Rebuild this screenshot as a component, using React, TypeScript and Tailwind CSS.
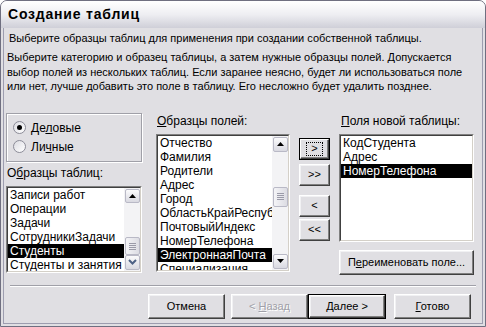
import type { ReactNode } from 'react';

const tableItems = [
  'Записи работ',
  'Операции',
  'Задачи',
  'СотрудникиЗадачи',
  'Студенты',
  'Студенты и занятия',
];

const fieldItems = [
  'Отчество',
  'Фамилия',
  'Родители',
  'Адрес',
  'Город',
  'ОбластьКрайРеспублика',
  'ПочтовыйИндекс',
  'НомерТелефона',
  'ЭлектроннаяПочта',
  'Специализация',
];

const newItems = ['КодСтудента', 'Адрес', 'НомерТелефона'];

const Arrow = ({ dir }: { dir: 'up' | 'down' | 'chevron' }) => (
  <svg width="9" height="6" viewBox="0 0 9 6">
    {dir === 'up' && <path d="M4.5 1 L8 5 L1 5 Z" fill="#000" />}
    {dir === 'down' && <path d="M1 1 L8 1 L4.5 5 Z" fill="#000" />}
    {dir === 'chevron' && (
      <path d="M1 1 L4.5 4.5 L8 1" stroke="#4d6185" strokeWidth="2" fill="none" />
    )}
  </svg>
);

const ScrollButton = ({ children }: { children: ReactNode }) => (
  <div className="flex h-[15px] w-[15px] items-center justify-center rounded-[2px] border border-[#b9b9c6] bg-linear-to-b from-[#fbfbfc] to-[#d9d9e1]">
    {children}
  </div>
);

type ScrollbarProps = {
  thumbTop: number;
  thumbHeight: number;
  downIcon?: 'down' | 'chevron';
};

const Scrollbar = ({ thumbTop, thumbHeight, downIcon = 'down' }: ScrollbarProps) => (
  <div className="flex h-full w-[16px] shrink-0 flex-col bg-[#f3f3f5] px-px py-px">
    <ScrollButton>
      <Arrow dir="up" />
    </ScrollButton>
    <div style={{ height: thumbTop }} />
    <div
      className="flex w-[15px] flex-col items-center justify-center gap-[1px] rounded-[2px] border border-[#b9b9c6] bg-linear-to-r from-[#f4f4f7] to-[#dcdce3]"
      style={{ height: thumbHeight }}
    >
      <div className="h-px w-[7px] bg-[#9a9aa8]" />
      <div className="h-px w-[7px] bg-[#9a9aa8]" />
      <div className="h-px w-[7px] bg-[#9a9aa8]" />
      <div className="h-px w-[7px] bg-[#9a9aa8]" />
    </div>
    <div className="flex-1" />
    <ScrollButton>
      <Arrow dir={downIcon} />
    </ScrollButton>
  </div>
);

type ListBoxProps = {
  items: string[];
  selected: string;
  className: string;
  scrollbar?: ReactNode;
};

const ListBox = ({ items, selected, className, scrollbar }: ListBoxProps) => (
  <div
    className={`border border-t-[#808080] border-l-[#808080] border-b-white border-r-white ${className}`}
  >
    <div className="flex h-full border border-t-[#404040] border-l-[#404040] border-b-[#d4d0c8] border-r-[#d4d0c8] bg-white">
      <div className="flex min-w-0 flex-1 flex-col overflow-hidden">
        {items.map((item) => (
          <div
            key={item}
            className={`h-[14px] shrink-0 whitespace-nowrap px-[2px] text-[12px] leading-[14px] ${
              item === selected ? 'bg-black text-white' : 'text-black'
            }`}
          >
            {item}
          </div>
        ))}
      </div>
      {scrollbar}
    </div>
  </div>
);

type ButtonProps = {
  children: ReactNode;
  className?: string;
  isDefault?: boolean;
  disabled?: boolean;
};

const Button = ({ children, className = '', isDefault, disabled }: ButtonProps) => (
  <div className={`${isDefault ? 'border border-black' : ''} ${className}`}>
    <div className="flex h-full items-center justify-center border border-t-white border-l-white border-b-[#404040] border-r-[#404040] bg-[#e0dfe3] shadow-[inset_-1px_-1px_#808080,inset_1px_1px_#f1f1f3]">
      <span
        className={`text-[11px] ${disabled ? 'text-[#a0a0a8] [text-shadow:1px_1px_#ffffff]' : 'text-black'}`}
      >
        {children}
      </span>
    </div>
  </div>
);

const Radio = ({ checked, children }: { checked?: boolean; children: ReactNode }) => (
  <div className="flex h-[14px] items-center gap-[5px]">
    <div className="flex h-[13px] w-[13px] items-center justify-center rounded-full border border-[#8c8c98] bg-linear-to-br from-[#dcdce2] to-white">
      {checked && <div className="h-[5px] w-[5px] rounded-full bg-black" />}
    </div>
    <span className="text-[12px]">{children}</span>
  </div>
);

export default function App() {
  return (
    <div className="h-[327px] w-[486px] font-['Liberation_Sans',Arial,sans-serif] text-black">
      <div className="flex h-full flex-col rounded-t-[7px] border border-[#6f6f80] bg-[#e0dfe3]">
        <div className="flex h-[27px] shrink-0 items-center rounded-t-[6px] bg-linear-to-b from-white via-[#eeeef2] to-[#cfcfd8] pl-[7px]">
          <span className="text-[14px] font-bold tracking-[0.8px]">Создание таблиц</span>
        </div>

        <div className="flex flex-1 flex-col px-[2px] pb-[2px]">
          <div className="flex flex-1 flex-col border border-t-0 border-[#9d9daf]">
            <p className="mt-[2px] h-[16px] pl-[5px] text-[11px] leading-[16px]">
              Выберите образцы таблиц для применения при создании собственной таблицы.
            </p>

            <p className="mt-[4px] pl-[3px] text-[11px] leading-[14.5px]">
              Выберите категорию и образец таблицы, а затем нужные образцы полей. Допускается
              <br />
              выбор полей из нескольких таблиц. Если заранее неясно, будет ли использоваться поле
              <br />
              или нет, лучше добавить это поле в таблицу. Его несложно будет удалить позднее.
            </p>

            <div className="mt-[19px] flex pl-[2px]">
              <div className="flex w-[136px] flex-col">
                <div className="flex h-[49px] flex-col justify-center gap-[5px] border border-[#a0a0a8] pl-[6px] shadow-[inset_1px_1px_#ffffff,1px_1px_#ffffff]">
                  <Radio checked>
                    Де<u>л</u>овые
                  </Radio>
                  <Radio>
                    Ли<u>ч</u>ные
                  </Radio>
                </div>
                <div className="mt-[3px] h-[16px] pl-[1px] text-[12px] leading-[16px]">
                  О<u>б</u>разцы таблиц:
                </div>
                <ListBox
                  items={tableItems}
                  selected="Студенты"
                  className="mt-[5px] h-[87px]"
                  scrollbar={<Scrollbar thumbTop={36} thumbHeight={19} downIcon="chevron" />}
                />
              </div>

              <div className="ml-[14px] flex w-[134px] flex-col">
                <div className="h-[16px] pl-[1px] text-[12px] leading-[16px]">
                  <u>О</u>бразцы полей:
                </div>
                <ListBox
                  items={fieldItems}
                  selected="ЭлектроннаяПочта"
                  className="mt-[5px] h-[138px]"
                  scrollbar={<Scrollbar thumbTop={35} thumbHeight={20} />}
                />
              </div>

              <div className="ml-[9px] flex w-[31px] flex-col pt-[25px]">
                <div className="h-[22px] border border-black">
                  <div className="flex h-full items-center justify-center border border-t-white border-l-white border-b-[#404040] border-r-[#404040] bg-[#e0dfe3] shadow-[inset_-1px_-1px_#808080]">
                    <span className="flex h-[14px] w-[17px] items-center justify-center border border-dotted border-black text-[11px]">
                      &gt;
                    </span>
                  </div>
                </div>
                <Button className="mt-[4px] h-[22px]">&gt;&gt;</Button>
                <Button className="mt-[9px] h-[22px]">&lt;</Button>
                <Button className="mt-[2px] h-[22px]">&lt;&lt;</Button>
              </div>

              <div className="ml-[9px] flex w-[135px] flex-col">
                <div className="h-[16px] pl-[2px] text-[12px] leading-[16px]">
                  <u>П</u>оля новой таблицы:
                </div>
                <ListBox
                  items={newItems}
                  selected="НомерТелефона"
                  className="mt-[5px] h-[108px]"
                />
                <Button className="mt-[8px] h-[25px]">
                  П<u>е</u>реименовать поле...
                </Button>
              </div>
            </div>

            <div className="mx-[6px] mt-[10px] h-[2px] border-t border-t-[#a0a0a8] border-b border-b-white" />

            <div className="mt-[7px] flex pl-[144px]">
              <Button className="h-[25px] w-[77px]">Отмена</Button>
              <Button disabled className="ml-[6px] h-[25px] w-[77px]">
                &lt; <u>Н</u>азад
              </Button>
              <Button isDefault className="h-[25px] w-[78px]">
                <u>Д</u>алее &gt;
              </Button>
              <Button className="ml-[8px] h-[25px] w-[77px]">
                <u>Г</u>отово
              </Button>
            </div>
          </div>
        </div>
      </div>
    </div>
  );
}
